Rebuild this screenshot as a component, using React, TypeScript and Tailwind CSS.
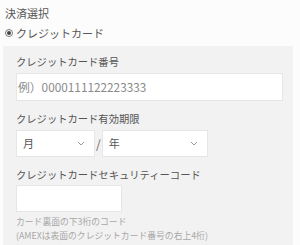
import React from "react";

const Chevron = () => (
  <svg width="8" height="5" viewBox="0 0 8 5" fill="none">
    <path d="M1 1 L4 4 L7 1" stroke="#9a9a9a" strokeWidth="1" />
  </svg>
);

export default function App() {
  return (
    <div
      className="w-[300px] h-[245px] overflow-hidden bg-[#fcfcfc] text-[#555555]"
      style={{ fontFamily: '"Noto Sans CJK JP", "Noto Sans", sans-serif' }}
    >
      <div className="pl-[5px] pt-[5px] h-[21px] text-[11px] leading-[16px]">決済選択</div>
      <div className="flex items-center pl-[5px] mt-[2px] h-[20px]">
        <div className="w-[8px] h-[8px] rounded-full border border-[#777] flex items-center justify-center">
          <div className="w-[4px] h-[4px] rounded-full bg-[#444]" />
        </div>
        <span className="ml-[3px] text-[11px] leading-[16px]">クレジットカード</span>
      </div>
      <div className="ml-[3px] mt-[3px] w-[290px] h-[220px] bg-[#f2f2f2] pl-[13px] pt-[8px]">
        <div className="text-[10.3px] leading-[16px] h-[16px]">クレジットカード番号</div>
        <div className="mt-[3px] w-[267px] h-[28px] bg-white border border-[#e6e6e6] flex items-center pl-[1px] text-[11.8px] text-[#8a8a8a]">
          例）0000111122223333
        </div>
        <div className="mt-[10px] text-[10.3px] leading-[16px] h-[16px]">クレジットカード有効期限</div>
        <div className="mt-[3px] flex items-center">
          <div className="w-[79px] h-[27px] bg-white border border-[#e6e6e6] flex items-center justify-between pl-[6px] pr-[9px] text-[11px]">
            <span>月</span>
            <Chevron />
          </div>
          <span className="mx-[1px] text-[12px] leading-none text-[#666]">/</span>
          <div className="w-[106px] h-[27px] bg-white border border-[#e6e6e6] flex items-center justify-between pl-[6px] pr-[9px] text-[11px]">
            <span>年</span>
            <Chevron />
          </div>
        </div>
        <div className="mt-[10px] text-[10.3px] leading-[16px] h-[16px]">クレジットカードセキュリティーコード</div>
        <div className="mt-[2px] w-[106px] h-[27px] bg-white border border-[#e6e6e6]" />
        <div className="mt-[3px] text-[8.8px] leading-[14px] text-[#a8a8a8] whitespace-nowrap">カード裏面の下3桁のコード</div>
        <div className="text-[8.8px] leading-[14px] text-[#a8a8a8] whitespace-nowrap">(AMEXは表面のクレジットカード番号の右上4桁)</div>
      </div>
    </div>
  );
}
